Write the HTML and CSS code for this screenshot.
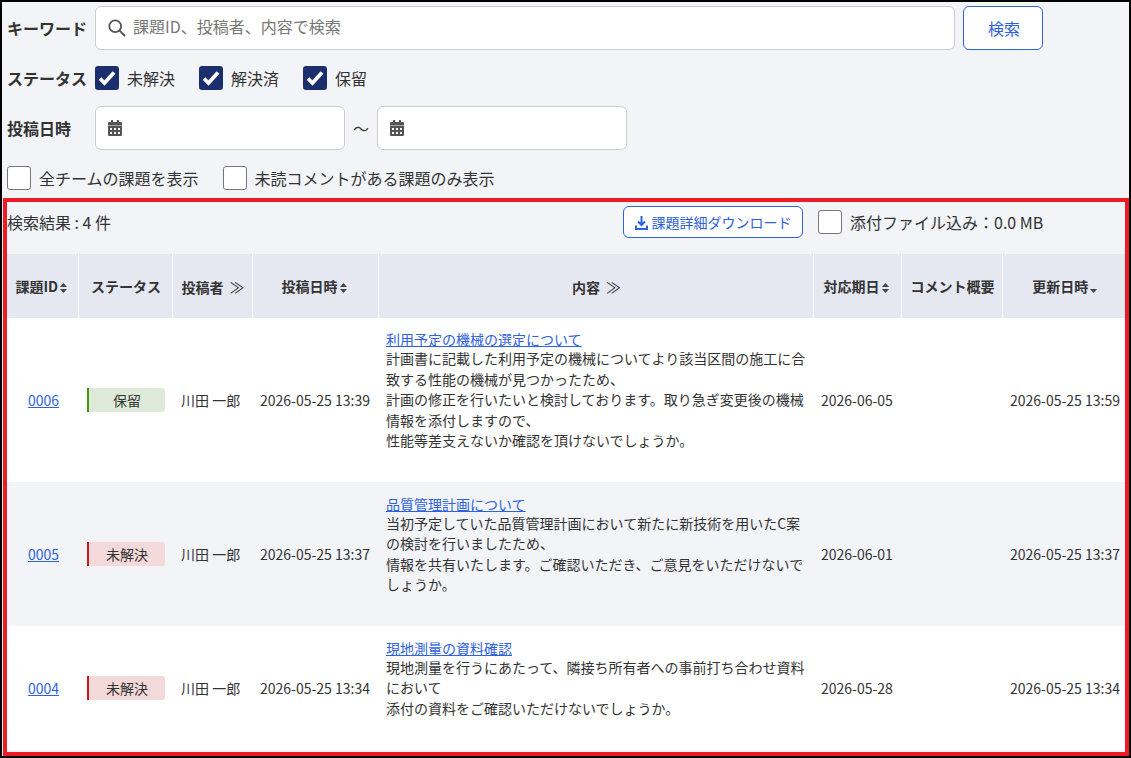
FILE: index.html
```html
<!DOCTYPE html>
<html lang="ja">
<head>
    <meta charset="UTF-8">
    <meta name="viewport" content="width=device-width, initial-scale=1.0">
    <title>課題一覧</title>
    <link rel="stylesheet" href="styles.css">
</head>
<body>
    <div class="page">
        <form class="search">
            <div class="search-row keyword-row">
                <span class="field-label">キーワード</span>
                <div class="input keyword-input">
                    <svg class="input-icon" width="18" height="18" viewBox="0 0 18 18"><circle cx="7.200" cy="7.200" r="5.900" fill="none" stroke="#555" stroke-width="1.800"/><path d="M11.600 11.600L16.500 16.500" stroke="#555" stroke-width="2" stroke-linecap="round"/></svg>
                    <span class="placeholder">課題ID、投稿者、内容で検索</span>
                </div>
                <button type="button" class="btn search-btn">検索</button>
            </div>
            <div class="search-row status-row">
                <span class="field-label">ステータス</span>
                <label class="check"><span class="box on"><svg width="24" height="24" viewBox="0 0 24 24"><path d="M5 12.500l4.500 4.500L19 6.500" fill="none" stroke="#fff" stroke-width="3.800"/></svg></span>未解決</label>
                <label class="check"><span class="box on"><svg width="24" height="24" viewBox="0 0 24 24"><path d="M5 12.500l4.500 4.500L19 6.500" fill="none" stroke="#fff" stroke-width="3.800"/></svg></span>解決済</label>
                <label class="check"><span class="box on"><svg width="24" height="24" viewBox="0 0 24 24"><path d="M5 12.500l4.500 4.500L19 6.500" fill="none" stroke="#fff" stroke-width="3.800"/></svg></span>保留</label>
            </div>
            <div class="search-row date-row">
                <span class="field-label">投稿日時</span>
                <div class="input date-input">
                    <svg width="14" height="16" viewBox="0 0 14 16"><path fill="#555" d="M3 0h2v2h4V0h2v2h2a1 1 0 0 1 1 1v2.500H0V3a1 1 0 0 1 1-1h2z"/><path fill="#555" fill-rule="evenodd" d="M0 6h14v9a1 1 0 0 1-1 1H1a1 1 0 0 1-1-1zM2 8v2h2V8zM6 8v2h2V8zM10 8v2h2V8zM2 12v2h2v-2zM6 12v2h2v-2zM10 12v2h2v-2z"/></svg>
                </div>
                <span class="tilde">～</span>
                <div class="input date-input">
                    <svg width="14" height="16" viewBox="0 0 14 16"><path fill="#555" d="M3 0h2v2h4V0h2v2h2a1 1 0 0 1 1 1v2.500H0V3a1 1 0 0 1 1-1h2z"/><path fill="#555" fill-rule="evenodd" d="M0 6h14v9a1 1 0 0 1-1 1H1a1 1 0 0 1-1-1zM2 8v2h2V8zM6 8v2h2V8zM10 8v2h2V8zM2 12v2h2v-2zM6 12v2h2v-2zM10 12v2h2v-2z"/></svg>
                </div>
            </div>
            <div class="search-row option-row">
                <label class="check"><span class="box"></span>全チームの課題を表示</label>
                <label class="check"><span class="box"></span>未読コメントがある課題のみ表示</label>
            </div>
        </form>

        <section class="results">
            <div class="results-bar">
                <span class="count">検索結果 : 4 件</span>
                <button type="button" class="btn download-btn">
                    <svg width="13" height="15" viewBox="0 0 13 15"><path d="M6.500 1v8.500M3 6.500l3.500 3.500L10 6.500M1 10.500V14h11v-3.500" fill="none" stroke="#2f62e0" stroke-width="2"/></svg>
                    課題詳細ダウンロード
                </button>
                <label class="check attach"><span class="box"></span>添付ファイル込み：0.0 MB</label>
            </div>
            <table class="issues">
                <colgroup>
                    <col class="c-id"><col class="c-status"><col class="c-author"><col class="c-date">
                    <col class="c-body"><col class="c-due"><col class="c-comment"><col class="c-updated">
                </colgroup>
                <thead>
                    <tr>
                        <th>課題ID<svg class="sort" width="7" height="10" viewBox="0 0 7 10"><path d="M0 4L3.500 0 7 4zM0 6h7L3.500 10z"/></svg></th>
                        <th>ステータス</th>
                        <th>投稿者 <span class="more">≫</span></th>
                        <th>投稿日時<svg class="sort" width="7" height="10" viewBox="0 0 7 10"><path d="M0 4L3.500 0 7 4zM0 6h7L3.500 10z"/></svg></th>
                        <th>内容 <span class="more">≫</span></th>
                        <th>対応期日<svg class="sort" width="7" height="10" viewBox="0 0 7 10"><path d="M0 4L3.500 0 7 4zM0 6h7L3.500 10z"/></svg></th>
                        <th>コメント概要</th>
                        <th>更新日時<svg class="sort last" width="7" height="10" viewBox="0 0 7 10"><path d="M0 6h7L3.500 10z"/></svg></th>
                    </tr>
                </thead>
                <tbody>
                    <tr class="row-a">
                        <td class="center"><a href="#">0006</a></td>
                        <td><span class="badge hold">保留</span></td>
                        <td class="author">川田 一郎</td>
                        <td>2026-05-25 13:39</td>
                        <td class="body-cell"><a href="#" class="title">利用予定の機械の選定について</a>計画書に記載した利用予定の機械についてより該当区間の施工に合致する性能の機械が見つかったため、<br>計画の修正を行いたいと検討しております。取り急ぎ変更後の機械情報を添付しますので、<br>性能等差支えないか確認を頂けないでしょうか。</td>
                        <td>2026-06-05</td>
                        <td></td>
                        <td>2026-05-25 13:59</td>
                    </tr>
                    <tr class="row-b">
                        <td class="center"><a href="#">0005</a></td>
                        <td><span class="badge open">未解決</span></td>
                        <td class="author">川田 一郎</td>
                        <td>2026-05-25 13:37</td>
                        <td class="body-cell"><a href="#" class="title">品質管理計画について</a>当初予定していた品質管理計画において新たに新技術を用いたC案の検討を行いましたため、<br>情報を共有いたします。ご確認いただき、ご意見をいただけないでしょうか。</td>
                        <td>2026-06-01</td>
                        <td></td>
                        <td>2026-05-25 13:37</td>
                    </tr>
                    <tr class="row-a">
                        <td class="center"><a href="#">0004</a></td>
                        <td><span class="badge open">未解決</span></td>
                        <td class="author">川田 一郎</td>
                        <td>2026-05-25 13:34</td>
                        <td class="body-cell"><a href="#" class="title">現地測量の資料確認</a>現地測量を行うにあたって、隣接ち所有者への事前打ち合わせ資料において<br>添付の資料をご確認いただけないでしょうか。</td>
                        <td>2026-05-28</td>
                        <td></td>
                        <td>2026-05-25 13:34</td>
                    </tr>
                </tbody>
            </table>
        </section>
    </div>
</body>
</html>
```

FILE: styles.css
```css
* {
    box-sizing: border-box;
}
html, body {
    margin: 0;
    height: 100%;
}
body {
    background-color: #f2f4f8;
    color: #333;
    font-family: "Noto Sans CJK JP", "Noto Sans", sans-serif;
    font-size: 16px;
}
.page {
    height: 758px;
    border: 2px solid #000;
    padding: 4px 0 0 1px;
    overflow: hidden;
}
.search {
    padding: 0 4px;
}
.search-row {
    display: flex;
    align-items: center;
}
.keyword-row {
    height: 44px;
}
.status-row {
    height: 24px;
    margin-top: 16px;
}
.date-row {
    height: 44px;
    margin-top: 16px;
}
.option-row {
    height: 24px;
    margin-top: 16px;
    gap: 24px;
}
.field-label {
    width: 88px;
    font-weight: 700;
    flex-shrink: 0;
}
.input {
    display: flex;
    align-items: center;
    height: 44px;
    background-color: #fff;
    border: 1px solid #ccc;
    border-radius: 6px;
    padding: 0 12px;
}
.keyword-input {
    width: 860px;
}
.input-icon {
    margin-right: 7px;
}
.placeholder {
    color: #777;
    position: relative;
    top: -2px;
}
.date-input {
    width: 250px;
}
.tilde {
    width: 32px;
    text-align: center;
}
.btn {
    background-color: #fff;
    border: 1px solid #2f62e0;
    border-radius: 6px;
    color: #2f62e0;
    font-family: inherit;
    cursor: pointer;
}
.search-btn {
    width: 80px;
    height: 44px;
    margin-left: 8px;
    padding: 0 0 0 2px;
    font-size: 16px;
}
.check {
    display: flex;
    align-items: center;
    gap: 8px;
}
.status-row .check {
    width: 104px;
}
.box {
    width: 24px;
    height: 24px;
    background-color: #fff;
    border: 1px solid #777;
    border-radius: 3px;
    flex-shrink: 0;
    overflow: hidden;
}
.box.on {
    background-color: #1b2f6e;
    border: 0;
}
.box svg {
    display: block;
}
.results {
    height: 558px;
    margin-top: 8px;
    border: 4px solid #ed1c24;
    overflow: hidden;
}
.results-bar {
    display: flex;
    align-items: center;
    height: 52px;
    padding-bottom: 12px;
}
.count {
    width: 616px;
}
.download-btn {
    display: flex;
    align-items: center;
    justify-content: center;
    gap: 4px;
    width: 180px;
    height: 32px;
    font-size: 14px;
    padding: 0;
}
.attach {
    margin-left: 15px;
}
.issues {
    width: 1118px;
    table-layout: fixed;
    border-collapse: collapse;
    font-size: 14px;
}
.c-id { width: 71px; }
.c-status { width: 94px; }
.c-author { width: 80px; }
.c-date { width: 126px; }
.c-body { width: 435px; }
.c-due { width: 88px; }
.c-comment { width: 101px; }
.c-updated { width: 123px; }
.issues th {
    height: 64px;
    background-color: #e5e8f1;
    border-right: 1px solid #fff;
    font-size: 14px;
    text-align: center;
    padding: 0 0 0 2px;
    white-space: nowrap;
}
.issues th:last-child {
    border-right: 0;
}
.issues td {
    padding: 0 0 0 8px;
    white-space: nowrap;
}
.issues td.center {
    text-align: center;
    padding: 0 0 0 2px;
}
.issues td.author {
    padding-left: 9px;
}
.issues td.body-cell {
    padding: 0 6px 19px 8px;
    white-space: normal;
    line-height: 20.5px;
}
.row-a {
    background-color: #fff;
}
.row-b {
    background-color: #f2f4f8;
}
.issues tbody tr:nth-child(1) { height: 164px; }
.issues tbody tr:nth-child(2) { height: 144px; }
.issues tbody tr:nth-child(3) { height: 124px; }
a {
    color: #2f62e0;
}
.title {
    display: block;
    line-height: 18px;
}
.badge {
    display: block;
    width: 78px;
    height: 24px;
    margin-left: 1px;
    line-height: 24px;
    text-align: center;
    border-left: 2px solid;
    border-radius: 0 3px 3px 0;
}
.badge.hold {
    background-color: #deead9;
    border-color: #3f9b0b;
}
.badge.open {
    background-color: #f3d9d9;
    border-color: #cc1818;
}
.more {
    margin-left: 3px;
    font-weight: 400;
    font-size: 15px;
}
.sort {
    margin: 0 4px 0 2px;
    vertical-align: -1px;
    fill: #444;
}
.sort.last {
    margin-right: 0;
}
```
